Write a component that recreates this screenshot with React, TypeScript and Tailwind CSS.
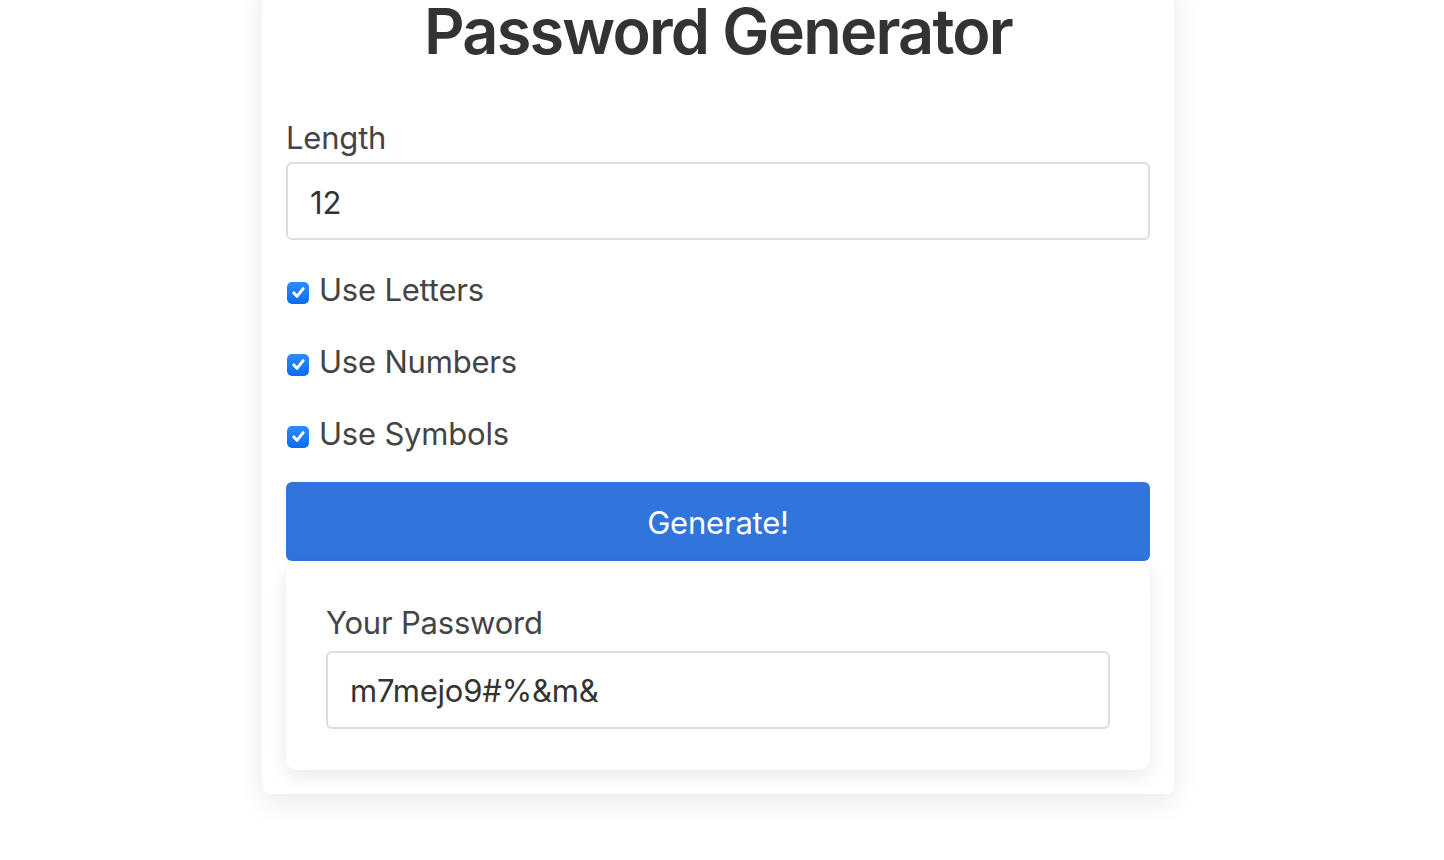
import { useState } from "react";

function CheckBox({ checked, onToggle }: { checked: boolean; onToggle: () => void }) {
  return (
    <button
      type="button"
      onClick={onToggle}
      aria-pressed={checked}
      className={
        checked
          ? "flex h-[22px] w-[22px] shrink-0 items-center justify-center rounded-[5px] bg-gradient-to-b from-[#2a8cff] to-[#0a6cf0]"
          : "flex h-[22px] w-[22px] shrink-0 items-center justify-center rounded-[5px] border border-[#aaa] bg-white"
      }
    >
      {checked && (
        <svg viewBox="0 0 16 16" className="h-[17px] w-[17px]" fill="none">
          <path
            d="M3.6 8.4 L6.6 11.6 L12.4 4.4"
            stroke="white"
            strokeWidth="2.8"
            strokeLinecap="round"
            strokeLinejoin="round"
          />
        </svg>
      )}
    </button>
  );
}

const options = [
  { key: "letters", label: "Use Letters" },
  { key: "numbers", label: "Use Numbers" },
  { key: "symbols", label: "Use Symbols" },
];

export default function App() {
  const [length, setLength] = useState("12");
  const [checked, setChecked] = useState<Record<string, boolean>>({
    letters: true,
    numbers: true,
    symbols: true,
  });
  const [password] = useState("m7mejo9#%&m&");

  return (
    <div className="min-h-[860px] bg-white font-['Inter','Liberation_Sans',sans-serif] text-[#444]">
      <div className="-mt-[20px] ml-[262px] w-[912px] rounded-[8px] bg-white px-6 pb-6 pt-[20px] shadow-[0_8px_28px_rgba(0,0,0,0.09)]">
        <h1 className="text-center text-[63px] font-semibold leading-[63px] tracking-[-1.8px] text-[#333]">
          Password Generator
        </h1>

        <label className="mt-[54px] block text-[31px] leading-[42px] tracking-[-0.2px]">Length</label>
        <input
          value={length}
          onChange={(e) => setLength(e.target.value)}
          className="mt-[3px] block h-[78px] w-full rounded-[6px] border-2 border-[#ddd] px-[22px] pt-[2px] text-[31px] tracking-[-0.2px] text-[#333] outline-none"
        />

        <div className="mt-[29px] flex flex-col gap-[30px]">
          {options.map((o) => (
            <div key={o.key} className="flex h-[42px] items-center gap-[10px]">
              <div className="pl-px pt-[5px]">
                <CheckBox
                  checked={checked[o.key]}
                  onToggle={() => setChecked({ ...checked, [o.key]: !checked[o.key] })}
                />
              </div>
              <span className="text-[31px] leading-[42px] tracking-[-0.2px]">{o.label}</span>
            </div>
          ))}
        </div>

        <button
          type="button"
          className="mt-[27px] flex h-[79px] w-full items-center justify-center rounded-[6px] bg-[#3174dc] pt-[3px] text-[31px] tracking-[-0.2px] text-white"
        >
          Generate!
        </button>

        <div className="mt-px rounded-[10px] bg-white px-10 pb-[41px] pt-10 shadow-[0_6px_20px_rgba(0,0,0,0.09)]">
          <label className="block text-[31px] leading-[42px] tracking-[-0.2px]">Your Password</label>
          <input
            readOnly
            value={password}
            className="mt-[7px] block h-[78px] w-full rounded-[6px] border-2 border-[#ddd] px-[22px] text-[31px] tracking-[-0.2px] text-[#333] outline-none"
          />
        </div>
      </div>
    </div>
  );
}
